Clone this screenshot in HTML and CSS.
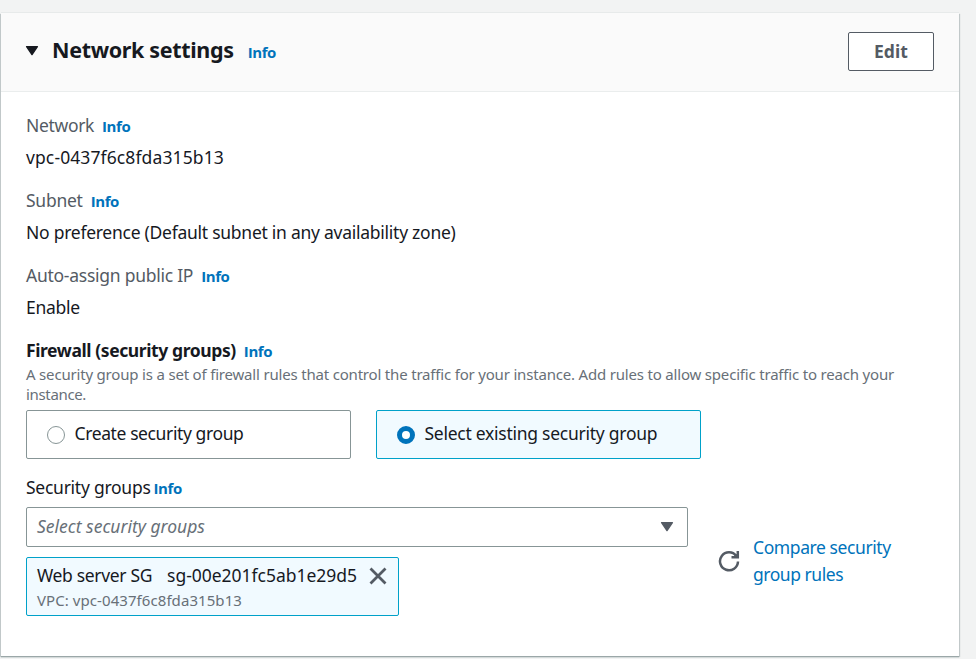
FILE: index.html
```html
<!DOCTYPE html>
<html lang="en">
<head>
<meta charset="utf-8">
<title>Network settings</title>
<link rel="stylesheet" href="styles.css">
</head>
<body>
<section class="card">
  <header class="card-header">
    <svg class="caret" width="14" height="12" viewBox="0 0 14 12"><path d="M1.6 1.6h10.8L7 9.6z" fill="#16191f" stroke="#16191f" stroke-width="1.4" stroke-linejoin="round"/></svg>
    <div class="heading">
      <h2 class="title">Network settings</h2>
      <a class="info">Info</a>
    </div>
    <button class="edit" type="button">Edit</button>
  </header>
  <div class="card-body">
    <div class="field">
      <div class="label-row"><span class="label network">Network</span><a class="info">Info</a></div>
      <div class="value id">vpc-0437f6c8fda315b13</div>
    </div>
    <div class="field">
      <div class="label-row"><span class="label">Subnet</span><a class="info">Info</a></div>
      <div class="value">No preference (Default subnet in any availability zone)</div>
    </div>
    <div class="field">
      <div class="label-row"><span class="label">Auto-assign public IP</span><a class="info">Info</a></div>
      <div class="value">Enable</div>
    </div>
    <div class="label-row"><span class="label strong">Firewall (security groups)</span><a class="info">Info</a></div>
    <p class="description">A security group is a set of firewall rules that control the traffic for your instance. Add rules to allow specific traffic to reach your <span class="tail">instance.</span></p>
    <div class="tiles">
      <div class="tile"><span class="radio"></span><span class="create">Create security group</span></div>
      <div class="tile selected"><span class="radio checked"></span><span>Select existing security group</span></div>
    </div>
    <div class="groups">
      <div class="picker">
        <div class="label-row tight"><span class="label dark">Security groups</span><a class="info">Info</a></div>
        <div class="select">
          <span class="placeholder">Select security groups</span>
          <svg class="caret" width="14" height="12" viewBox="0 0 14 12"><path d="M1.6 1.6h10.8L7 9.6z" fill="#545b64" stroke="#545b64" stroke-width="1.4" stroke-linejoin="round"/></svg>
        </div>
        <div class="token">
          <div class="token-main">
            <div class="token-title"><span class="sg-name">Web server SG</span><span class="sg-id">sg-00e201fc5ab1e29d5</span></div>
            <div class="token-sub">VPC: vpc-0437f6c8fda315b13</div>
          </div>
          <svg class="close" width="18" height="18" viewBox="0 0 18 18"><path d="M1.500 1.500l15 15M16.500 1.500l-15 15" fill="none" stroke="#545b64" stroke-width="2.800"/></svg>
        </div>
      </div>
      <svg class="refresh" width="22" height="22" viewBox="0 0 22 22"><g fill="none" stroke="#545b64" stroke-width="2.5"><path d="M20 11.500A9 9 0 1 1 18.300 6"/><path d="M19.800 1v6.200H13.500"/></g><path d="M16.500 4.500L20 4v3.500h-4z" fill="#545b64"/></svg>
      <a class="compare">Compare security<br><span class="compare-tail">group rules</span></a>
    </div>
  </div>
</section>
</body>
</html>
```
FILE: styles.css
```css
* { box-sizing: border-box; }

body {
  margin: 0;
  padding: 13px 17px 3px 1px;
  height: 659px;
  overflow: hidden;
  background: #f2f3f3;
  color: #16191f;
  font: 17.5px/27px "Noto Sans", sans-serif;
  letter-spacing: -0.26px;
}

.card {
  height: 643px;
  background: #fff;
  box-shadow: 0 1px 0 0 #9ba7a8, 0 2px 0 0 #d5dbdb, 1px 1px 1px 0 rgba(0, 28, 36, 0.2), -1px 1px 1px 0 rgba(0, 28, 36, 0.2), 0 -1px 0 0 #e7eaea;
}

.card-header {
  display: flex;
  align-items: center;
  height: 79px;
  padding: 0 25px 2px 24px;
  border-bottom: 1px solid #eaeded;
  background: #fafafa;
}

.caret { flex: none; display: block; }

.heading { display: flex; align-items: baseline; margin: 0 0 2px 13px; }

.title {
  margin: 0 14px 0 0;
  font-size: 21.5px;
  line-height: 30px;
  font-weight: 700;
  letter-spacing: -0.34px;
}

.info {
  color: #0073bb;
  font: 700 15px/20px "Open Sans", sans-serif;
  letter-spacing: -0.4px;
}

.edit {
  width: 86px;
  height: 39px;
  margin-left: auto;
  padding: 1px 0 0;
  border: 1px solid #545b64;
  border-radius: 2px;
  background: #fff;
  color: #545b64;
  font: 700 17.5px/27px "Noto Sans", sans-serif;
  letter-spacing: 0.08px;
}

.card-body { padding: 20px 25px 0; }

.field { margin-bottom: 16px; }

.label-row { display: flex; align-items: baseline; gap: 8px; height: 27px; }
.label-row.tight { gap: 3px; }
.label { color: #545b64; }
.label.network { letter-spacing: -0.34px; }
.label.dark { color: #16191f; }
.label.strong { color: #16191f; font-weight: 700; letter-spacing: -0.4px; }

.value { margin-top: 5px; }
.value.id { letter-spacing: 0.11px; }

.description {
  width: 880px;
  margin: 0 0 6px;
  color: #687078;
  font-size: 15px;
  line-height: 20px;
  letter-spacing: -0.187px;
}
.tail { letter-spacing: -0.34px; }

.tiles { display: flex; gap: 25px; }
.tile {
  display: flex;
  align-items: center;
  width: 325px;
  height: 49px;
  padding: 0 0 2px 20px;
  border: 1px solid #879596;
  border-radius: 2px;
}
.tile.selected { border-color: #00a1c9; background: #f1faff; }
.create { letter-spacing: -0.39px; }
.radio {
  width: 18px;
  height: 18px;
  margin: 3px 9.5px 0 0;
  border: 1.5px solid #879596;
  border-radius: 50%;
  background: #fff;
}
.radio.checked { border: 5px solid #0073bb; }

.groups { display: flex; align-items: center; margin-top: 15px; }
.picker { width: 662px; }

.select {
  display: flex;
  align-items: center;
  justify-content: space-between;
  height: 40px;
  margin: 6px 0 10px;
  padding: 0 13px 1px 10px;
  border: 1px solid #879596;
  border-radius: 2px;
}
.placeholder { color: #687078; font-style: italic; letter-spacing: 0; }

.token {
  display: flex;
  width: 373px;
  height: 59px;
  padding: 4px 11px 0 10px;
  border: 1px solid #00a1c9;
  border-radius: 2px;
  background: #f1faff;
}
.token-title { display: flex; gap: 15px; white-space: nowrap; }
.sg-name { letter-spacing: -0.34px; }
.sg-id { letter-spacing: -0.02px; }
.token-sub { color: #687078; font-size: 15px; line-height: 22px; letter-spacing: 0.07px; }
.close { flex: none; margin: 5px 0 0 auto; }

.refresh { flex: none; margin: 31px 0 0 30px; }

.compare { margin: 32px 0 0 13px; color: #0073bb; letter-spacing: -0.41px; white-space: nowrap; }
.compare-tail { letter-spacing: -0.46px; }
```
